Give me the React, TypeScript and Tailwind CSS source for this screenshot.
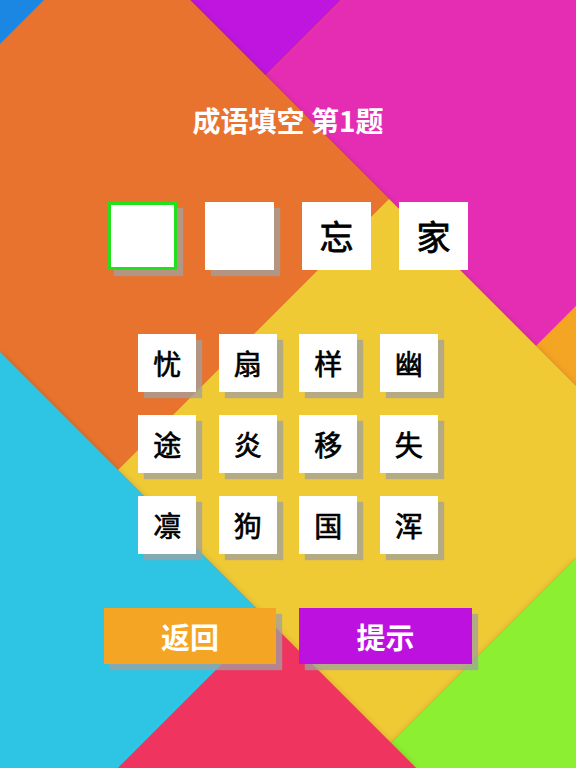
import React from 'react';

const FONT = { fontFamily: '"Noto Sans CJK SC", "Noto Sans", sans-serif' };

// 背景色块（45°斜切）
const Backdrop = () => (
  <svg className="absolute inset-0" width={576} height={768} viewBox="0 0 576 768">
    <defs>
      <filter id="soft" x="-10%" y="-10%" width="120%" height="120%">
        <feDropShadow dx="0" dy="1" stdDeviation="3" floodColor="#000" floodOpacity="0.2" />
      </filter>
    </defs>
    <rect width="576" height="768" fill="#e8732f" />
    <polygon points="190,0 341,0 265.5,75.5" fill="#bf15de" />
    <polygon points="341,0 576,0 576,306 536,346 265.5,75.5" fill="#e52db4" />
    <polygon points="576,306 576,386 536,346" fill="#f5a524" />
    <g filter="url(#soft)">
      <polygon points="0,0 190,0 389,199 118,470 0,352" fill="#e8732f" />
      <polygon points="0,0 44,0 0,44" fill="#1c86e3" />
      <polygon points="389,199 576,386 576,558 391,743 118,470" fill="#f0ca36" />
    </g>
    <polygon points="576,558 576,768 416,768 391,743" fill="#8cef33" filter="url(#soft)" />
    <g filter="url(#soft)">
      <polygon points="0,352 267,619 118,768 0,768" fill="#2fc5e5" />
      <polygon points="267,619 416,768 118,768" fill="#ef345e" />
    </g>
  </svg>
);

const SHADOW = 'shadow-[6px_6px_1px_rgba(160,160,160,0.75)]';

const answers = [
  { ch: '', active: true, shadow: true },
  { ch: '', active: false, shadow: true },
  { ch: '忘', active: false, shadow: false },
  { ch: '家', active: false, shadow: false },
];

const choices = ['忧', '扇', '样', '幽', '途', '炎', '移', '失', '凛', '狗', '国', '浑'];

export default function App() {
  return (
    <div className="relative w-[576px] h-[768px] overflow-hidden" style={FONT}>
      <Backdrop />
      <div className="relative flex flex-col items-center pt-[106px]">
        <h1 className="text-[28px] leading-[28px] font-bold text-white">成语填空 第1题</h1>

        <div className="mt-[68px] flex gap-[28px]">
          {answers.map((a, i) => (
            <div
              key={i}
              className={`w-[69px] h-[68px] bg-white flex items-center justify-center text-[34px] leading-none text-black [-webkit-text-stroke:0.8px_black] ${
                a.active ? 'border-[3px] border-[#22e01c]' : ''
              } ${a.shadow ? SHADOW : ''}`}
            >
              {a.ch}
            </div>
          ))}
        </div>

        <div className="mt-[64px] grid grid-cols-4 gap-x-[22.5px] gap-y-[23px]">
          {choices.map((c) => (
            <div
              key={c}
              className={`w-[58px] h-[58px] bg-white flex items-center justify-center text-[28px] leading-none text-black [-webkit-text-stroke:0.7px_black] ${SHADOW}`}
            >
              {c}
            </div>
          ))}
        </div>

        <div className="mt-[54px] flex gap-[23px]">
          <button className={`w-[172px] h-[56px] bg-[#f5a524] text-white text-[29px] font-bold leading-none ${SHADOW}`}>
            返回
          </button>
          <button className={`w-[173px] h-[56px] bg-[#bd12df] text-white text-[29px] font-bold leading-none ${SHADOW}`}>
            提示
          </button>
        </div>
      </div>
    </div>
  );
}
